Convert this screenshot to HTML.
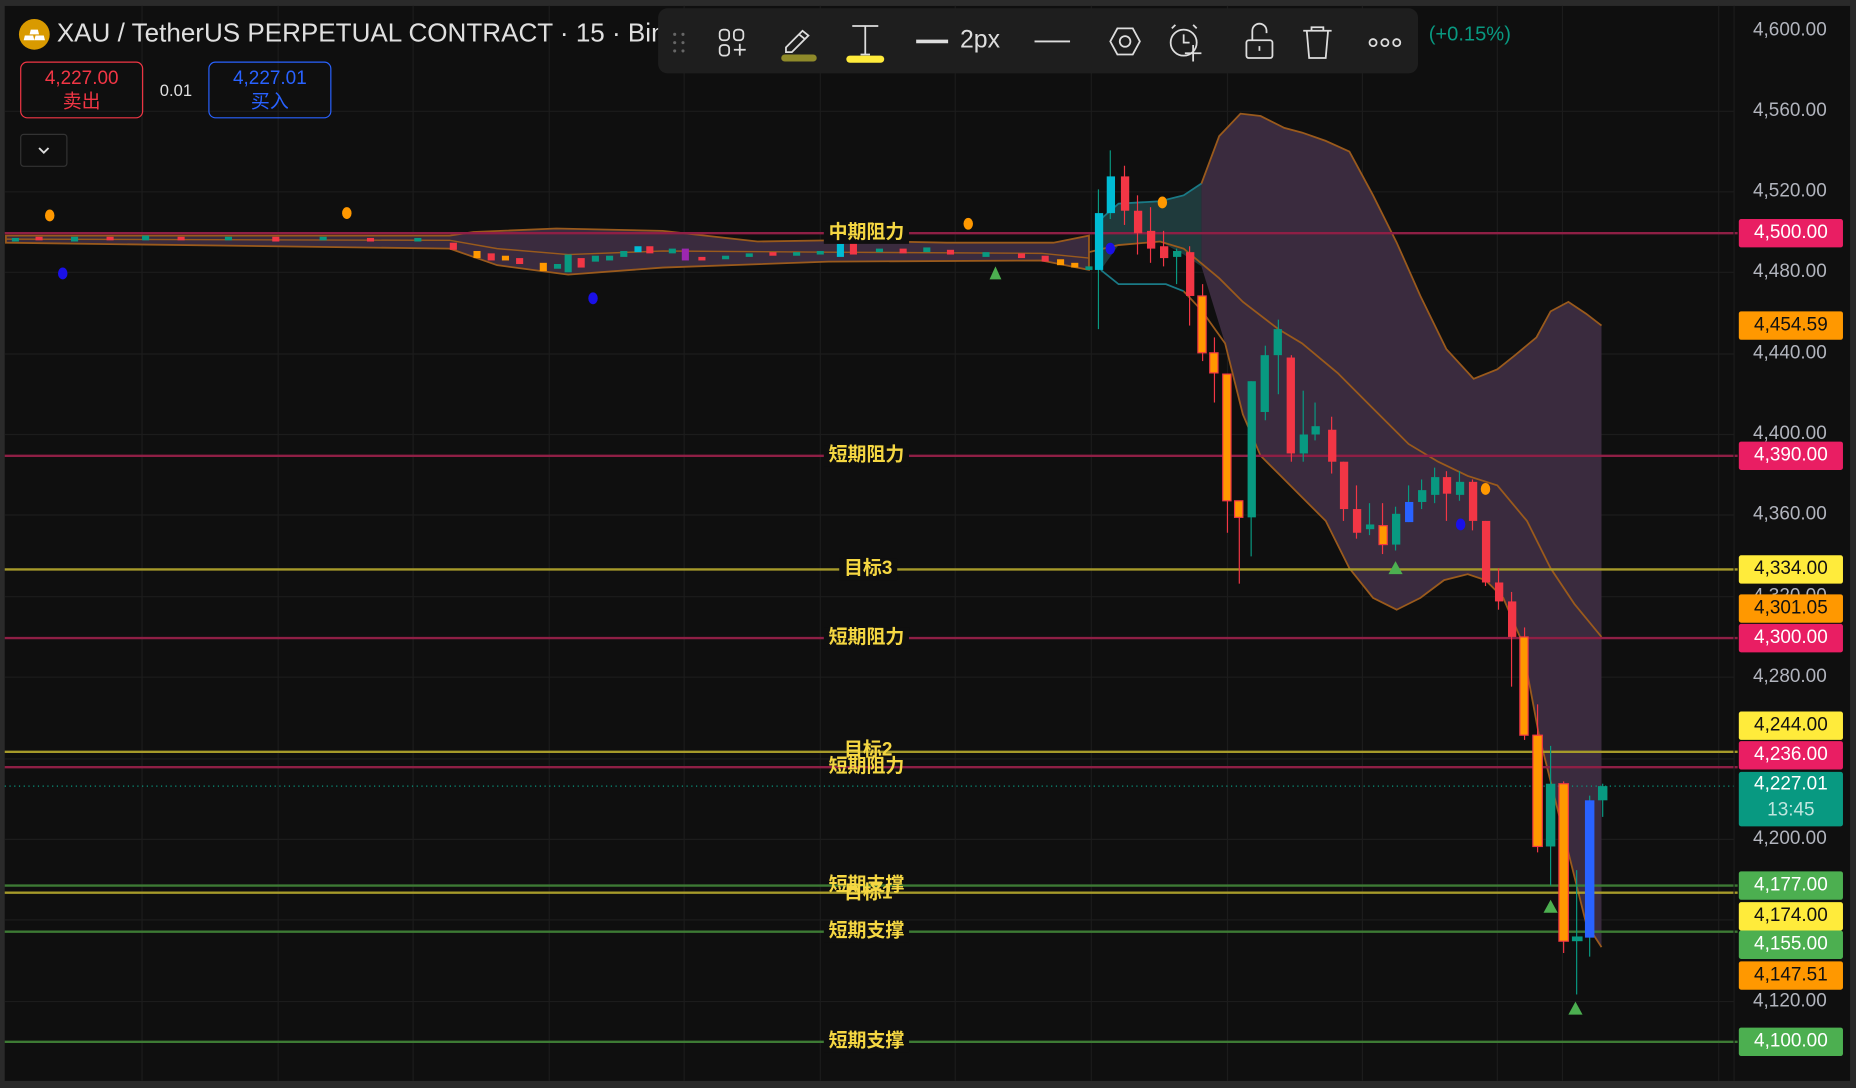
<!DOCTYPE html>
<html><head><meta charset="utf-8"><style>
html,body{margin:0;padding:0;background:#0f0f0f;overflow:hidden}
#w{width:1568px;height:919px;transform:scale(1.18367,1.18389);transform-origin:0 0;position:relative;background:#0f0f0f;font-family:"Liberation Sans","Noto Sans CJK SC",sans-serif}
.ax{position:absolute;left:1481px;color:#b2b5be;font-size:16px;line-height:20px}
.bd{position:absolute;left:1469px;width:88px;height:24px;border-radius:2px;font-size:16px;line-height:24px;text-align:center;color:#fff}
.lb{position:absolute;color:#f5d742;font-size:16px;font-weight:bold;background:#0f0f0f;padding:0 4px;line-height:18px;transform:translateY(-9px)}
</style></head><body><div id="w">
<svg width="1568" height="919" style="position:absolute;left:0;top:0">
<rect x="0" y="0" width="1568" height="5" fill="#2a2a2a"/>
<rect x="0" y="0" width="4" height="919" fill="#2a2a2a"/>
<rect x="1563" y="0" width="5" height="919" fill="#2a2a2a"/>
<rect x="0" y="913" width="1568" height="6" fill="#2a2a2a"/>
<g stroke="#1c1c1c" stroke-width="1">
<line x1="120" y1="5" x2="120" y2="913"/><line x1="235" y1="5" x2="235" y2="913"/><line x1="349" y1="5" x2="349" y2="913"/><line x1="464" y1="5" x2="464" y2="913"/><line x1="578" y1="5" x2="578" y2="913"/><line x1="693" y1="5" x2="693" y2="913"/><line x1="807" y1="5" x2="807" y2="913"/><line x1="922" y1="5" x2="922" y2="913"/><line x1="1037" y1="5" x2="1037" y2="913"/><line x1="1151" y1="5" x2="1151" y2="913"/><line x1="1265" y1="5" x2="1265" y2="913"/><line x1="1320" y1="5" x2="1320" y2="913"/><line x1="1452" y1="5" x2="1452" y2="913"/>
<line x1="4" y1="94" x2="1465" y2="94"/><line x1="4" y1="162" x2="1465" y2="162"/><line x1="4" y1="230" x2="1465" y2="230"/><line x1="4" y1="299" x2="1465" y2="299"/><line x1="4" y1="367" x2="1465" y2="367"/><line x1="4" y1="435" x2="1465" y2="435"/><line x1="4" y1="504" x2="1465" y2="504"/><line x1="4" y1="572" x2="1465" y2="572"/><line x1="4" y1="641" x2="1465" y2="641"/><line x1="4" y1="709" x2="1465" y2="709"/><line x1="4" y1="777" x2="1465" y2="777"/><line x1="4" y1="846" x2="1465" y2="846"/>
</g>
<!-- flat band -->
<path d="M5,199 L380,199 L400,196 L470,193 L560,195 L640,204 L700,203 L800,205 L890,205 L920,199 L920,228 L880,220 L700,221 L560,226 L480,232 L420,224 L380,210 L5,205 Z" fill="#3a2b3e" stroke="#9a5a1c" stroke-width="1.5"/>
<path d="M5,202 L380,203 L420,210 L480,215 L560,212 L700,213 L880,214 L920,218" fill="none" stroke="#9a5a1c" stroke-width="1.2"/>
<!-- big bands -->
<path d="M1015,155 L1030,115 L1048,96 L1065,98 L1085,108 L1100,112 L1120,119 L1140,128 L1160,165 L1180,205 L1200,250 L1222,295 L1245,320 L1265,312 L1280,300 L1298,285 L1310,263 L1325,255 L1340,265 L1353,275 L1353,800 L1340,780 L1320,700 L1300,620 L1285,540 L1270,505 L1255,490 L1240,485 L1220,490 L1200,505 L1180,515 L1160,505 L1140,480 L1120,440 L1100,420 L1080,400 L1065,385 L1050,350 L1035,290 L1015,225 Z" fill="#3a2b3e"/>
<path d="M930,228 L945,207 L980,204 L1000,215 L1015,225 L1015,155 L1000,165 L980,170 L945,172 L930,185 Z" fill="#1f3a3c"/>
<path d="M930,228 L945,240 L985,240 L1000,246" fill="none" stroke="#1a7a86" stroke-width="1.5"/>
<path d="M930,185 L945,172 L980,170 L1000,165 L1015,155" fill="none" stroke="#1a7a86" stroke-width="1.5"/>
<path d="M1015,155 L1030,115 L1048,96 L1065,98 L1085,108 L1100,112 L1120,119 L1140,128 L1160,165 L1180,205 L1200,250 L1222,295 L1245,320 L1265,312 L1280,300 L1298,285 L1310,263 L1325,255 L1340,265 L1353,275" fill="none" stroke="#9a5a1c" stroke-width="1.5"/>
<path d="M1000,246 L1015,262 L1035,290 L1050,350 L1065,385 L1080,400 L1100,420 L1120,440 L1140,480 L1160,505 L1180,515 L1200,505 L1220,490 L1240,485 L1255,490 L1270,505 L1285,540 L1300,620 L1320,700 L1340,780 L1353,800" fill="none" stroke="#9a5a1c" stroke-width="1.5"/>
<path d="M920,213 L945,207 L980,204 L1000,210 L1030,235 L1050,255 L1080,278 L1100,290 L1130,315 L1160,345 L1190,375 L1215,390 L1240,402 L1265,410 L1290,440 L1310,480 L1330,510 L1353,538" fill="none" stroke="#9a5a1c" stroke-width="1.5"/>
<!-- horizontal lines -->
<g stroke-width="2">
<line x1="4" y1="197" x2="1468" y2="197" stroke="#8e1f45"/>
<line x1="4" y1="385" x2="1468" y2="385" stroke="#8e1f45"/>
<line x1="4" y1="481" x2="1468" y2="481" stroke="#a69a2a"/>
<line x1="4" y1="539" x2="1468" y2="539" stroke="#8e1f45"/>
<line x1="4" y1="635" x2="1468" y2="635" stroke="#a69a2a"/>
<line x1="4" y1="648" x2="1468" y2="648" stroke="#8e1f45"/>
<line x1="4" y1="748" x2="1468" y2="748" stroke="#3d7a34"/>
<line x1="4" y1="754" x2="1468" y2="754" stroke="#a69a2a"/>
<line x1="4" y1="787" x2="1468" y2="787" stroke="#3d7a34"/>
<line x1="4" y1="880" x2="1468" y2="880" stroke="#3d7a34"/>
</g>
<line x1="4" y1="664" x2="1468" y2="664" stroke="#089981" stroke-width="1" stroke-dasharray="1,3"/>
<!-- flat candles -->
<g>
<rect x="10" y="201" width="6" height="3" fill="#089981"/><rect x="30" y="200" width="6" height="3" fill="#f23645"/><rect x="60" y="200" width="6" height="4" fill="#089981"/><rect x="90" y="200" width="6" height="3" fill="#f23645"/><rect x="120" y="199" width="6" height="4" fill="#089981"/><rect x="150" y="200" width="6" height="3" fill="#f23645"/><rect x="190" y="200" width="6" height="3" fill="#089981"/><rect x="230" y="200" width="6" height="4" fill="#f23645"/><rect x="270" y="200" width="6" height="3" fill="#089981"/><rect x="310" y="201" width="6" height="3" fill="#f23645"/><rect x="350" y="201" width="6" height="3" fill="#089981"/>
<rect x="380" y="205" width="6" height="6" fill="#f23645"/><rect x="400" y="212" width="6" height="6" fill="#ff9800"/><rect x="412" y="214" width="6" height="6" fill="#f23645"/><rect x="424" y="216" width="6" height="4" fill="#ff9800"/><rect x="436" y="218" width="6" height="5" fill="#f23645"/><rect x="456" y="222" width="6" height="7" fill="#ff9800"/><rect x="468" y="223" width="6" height="4" fill="#089981"/><rect x="477" y="215" width="6" height="15" fill="#089981"/><rect x="488" y="218" width="6" height="8" fill="#f23645"/><rect x="500" y="216" width="6" height="5" fill="#089981"/><rect x="512" y="216" width="6" height="4" fill="#089981"/><rect x="524" y="212" width="6" height="5" fill="#089981"/><rect x="536" y="208" width="6" height="5" fill="#00bcd4"/><rect x="546" y="208" width="6" height="6" fill="#f23645"/><rect x="565" y="210" width="6" height="4" fill="#089981"/><rect x="576" y="210" width="6" height="10" fill="#9c27b0"/><rect x="590" y="217" width="6" height="3" fill="#f23645"/><rect x="610" y="216" width="6" height="3" fill="#089981"/><rect x="630" y="214" width="6" height="3" fill="#089981"/><rect x="650" y="213" width="6" height="3" fill="#f23645"/><rect x="670" y="213" width="6" height="3" fill="#089981"/><rect x="690" y="212" width="6" height="3" fill="#089981"/><rect x="707" y="206" width="6" height="11" fill="#00bcd4"/><rect x="718" y="205" width="6" height="10" fill="#f23645"/><rect x="740" y="210" width="6" height="3" fill="#089981"/><rect x="760" y="210" width="6" height="4" fill="#f23645"/><rect x="780" y="209" width="6" height="4" fill="#089981"/><rect x="800" y="211" width="6" height="4" fill="#f23645"/><rect x="830" y="213" width="6" height="4" fill="#089981"/><rect x="860" y="214" width="6" height="4" fill="#f23645"/><rect x="880" y="216" width="6" height="5" fill="#f23645"/><rect x="893" y="219" width="6" height="5" fill="#ff9800"/><rect x="905" y="222" width="6" height="4" fill="#ff9800"/><rect x="917" y="225" width="6" height="3" fill="#089981"/>
</g>
<!-- main candles -->
<g stroke-width="1">
<line x1="928" y1="160" x2="928" y2="278" stroke="#089981"/><rect x="925" y="180" width="7" height="48" fill="#00bcd4"/>
<line x1="938" y1="127" x2="938" y2="185" stroke="#089981"/><rect x="935" y="149" width="7" height="31" fill="#00bcd4"/>
<line x1="950" y1="140" x2="950" y2="190" stroke="#f23645"/><rect x="947" y="149" width="7" height="29" fill="#f23645"/>
<line x1="961" y1="165" x2="961" y2="215" stroke="#f23645"/><rect x="958" y="178" width="7" height="19" fill="#f23645"/>
<line x1="972" y1="175" x2="972" y2="222" stroke="#f23645"/><rect x="969" y="195" width="7" height="15" fill="#f23645"/>
<line x1="983" y1="195" x2="983" y2="225" stroke="#f23645"/><rect x="980" y="208" width="7" height="10" fill="#f23645"/>
<line x1="994" y1="210" x2="994" y2="240" stroke="#089981"/><rect x="991" y="212" width="7" height="5" fill="#089981"/>
<line x1="1005" y1="208" x2="1005" y2="275" stroke="#f23645"/><rect x="1002" y="213" width="7" height="37" fill="#f23645"/>
<line x1="1016" y1="240" x2="1016" y2="305" stroke="#f23645"/><rect x="1012" y="250" width="7" height="48" fill="#ff9800" stroke="#f23645"/>
<line x1="1026" y1="285" x2="1026" y2="340" stroke="#f23645"/><rect x="1022" y="298" width="7" height="17" fill="#ff9800" stroke="#f23645"/>
<line x1="1037" y1="316" x2="1037" y2="450" stroke="#f23645"/><rect x="1033" y="316" width="7" height="107" fill="#ff9800" stroke="#f23645"/>
<line x1="1047" y1="423" x2="1047" y2="493" stroke="#f23645"/><rect x="1043" y="423" width="7" height="14" fill="#ff9800" stroke="#f23645"/>
<line x1="1057" y1="322" x2="1057" y2="470" stroke="#089981"/><rect x="1054" y="322" width="7" height="115" fill="#089981"/>
<line x1="1069" y1="292" x2="1069" y2="355" stroke="#089981"/><rect x="1065" y="300" width="7" height="48" fill="#089981"/>
<line x1="1080" y1="270" x2="1080" y2="333" stroke="#089981"/><rect x="1076" y="278" width="7" height="22" fill="#089981"/>
<line x1="1091" y1="300" x2="1091" y2="390" stroke="#f23645"/><rect x="1087" y="302" width="7" height="81" fill="#f23645"/>
<line x1="1101" y1="330" x2="1101" y2="390" stroke="#089981"/><rect x="1098" y="367" width="7" height="16" fill="#089981"/>
<line x1="1111" y1="340" x2="1111" y2="372" stroke="#089981"/><rect x="1108" y="360" width="7" height="7" fill="#089981"/>
<line x1="1125" y1="352" x2="1125" y2="400" stroke="#f23645"/><rect x="1122" y="363" width="7" height="27" fill="#f23645"/>
<line x1="1135" y1="390" x2="1135" y2="440" stroke="#f23645"/><rect x="1132" y="390" width="7" height="40" fill="#f23645"/>
<line x1="1146" y1="410" x2="1146" y2="455" stroke="#f23645"/><rect x="1143" y="430" width="7" height="20" fill="#f23645"/>
<line x1="1157" y1="425" x2="1157" y2="452" stroke="#089981"/><rect x="1154" y="443" width="7" height="4" fill="#089981"/>
<line x1="1168" y1="425" x2="1168" y2="468" stroke="#f23645"/><rect x="1165" y="444" width="7" height="16" fill="#ff9800" stroke="#f23645"/>
<line x1="1179" y1="428" x2="1179" y2="465" stroke="#089981"/><rect x="1176" y="434" width="7" height="26" fill="#089981"/>
<line x1="1190" y1="410" x2="1190" y2="441" stroke="#089981"/><rect x="1187" y="424" width="7" height="17" fill="#2962ff"/>
<line x1="1201" y1="405" x2="1201" y2="430" stroke="#089981"/><rect x="1198" y="414" width="7" height="10" fill="#089981"/>
<line x1="1212" y1="395" x2="1212" y2="425" stroke="#089981"/><rect x="1209" y="403" width="7" height="15" fill="#089981"/>
<line x1="1222" y1="398" x2="1222" y2="440" stroke="#f23645"/><rect x="1219" y="403" width="7" height="14" fill="#f23645"/>
<line x1="1233" y1="398" x2="1233" y2="423" stroke="#089981"/><rect x="1230" y="407" width="7" height="11" fill="#089981"/>
<line x1="1244" y1="405" x2="1244" y2="448" stroke="#f23645"/><rect x="1241" y="407" width="7" height="33" fill="#f23645"/>
<line x1="1255" y1="440" x2="1255" y2="495" stroke="#f23645"/><rect x="1252" y="440" width="7" height="52" fill="#f23645"/>
<line x1="1266" y1="480" x2="1266" y2="515" stroke="#f23645"/><rect x="1263" y="492" width="7" height="16" fill="#f23645"/>
<line x1="1277" y1="500" x2="1277" y2="580" stroke="#f23645"/><rect x="1274" y="508" width="7" height="30" fill="#f23645"/>
<line x1="1288" y1="530" x2="1288" y2="625" stroke="#f23645"/><rect x="1284" y="538" width="7" height="83" fill="#ff9800" stroke="#f23645"/>
<line x1="1299" y1="595" x2="1299" y2="720" stroke="#f23645"/><rect x="1295" y="621" width="8" height="94" fill="#ff9800" stroke="#f23645"/>
<line x1="1310" y1="630" x2="1310" y2="748" stroke="#089981"/><rect x="1306" y="662" width="8" height="53" fill="#089981"/>
<line x1="1321" y1="660" x2="1321" y2="805" stroke="#f23645"/><rect x="1317" y="662" width="8" height="133" fill="#ff9800" stroke="#f23645"/>
<line x1="1332" y1="735" x2="1332" y2="840" stroke="#089981"/><rect x="1328" y="791" width="9" height="4" fill="#089981"/>
<line x1="1343" y1="672" x2="1343" y2="808" stroke="#089981"/><rect x="1339" y="676" width="8" height="116" fill="#2962ff"/>
<line x1="1354" y1="662" x2="1354" y2="690" stroke="#089981"/><rect x="1350" y="664" width="8" height="12" fill="#089981"/>
</g>
<!-- markers -->
<g fill="#ff9800"><ellipse cx="42" cy="182" rx="4" ry="5"/><ellipse cx="293" cy="180" rx="4" ry="5"/><ellipse cx="818" cy="189" rx="4" ry="5"/><ellipse cx="982" cy="171" rx="4" ry="5"/><ellipse cx="1255" cy="413" rx="4" ry="5"/></g>
<g fill="#1a10e8"><ellipse cx="53" cy="231" rx="4" ry="5"/><ellipse cx="501" cy="252" rx="4" ry="5"/><ellipse cx="938" cy="210" rx="4" ry="5"/><ellipse cx="1234" cy="443" rx="4" ry="5"/></g>
<g fill="#4caf50"><path d="M841,225 L846,236 L836,236Z"/><path d="M1179,474 L1185,485 L1173,485Z"/><path d="M1310,760 L1316,771 L1304,771Z"/><path d="M1331,846 L1337,857 L1325,857Z"/></g>
<line x1="1465" y1="5" x2="1465" y2="913" stroke="#1c1c1c"/>
</svg>
<!-- line labels -->
<div class="lb" style="left:696px;top:197px">中期阻力</div>
<div class="lb" style="left:696px;top:385px">短期阻力</div>
<div class="lb" style="left:709px;top:481px">目标3</div>
<div class="lb" style="left:696px;top:539px">短期阻力</div>
<div class="lb" style="left:709px;top:634px;background:none">目标2</div>
<div class="lb" style="left:696px;top:648px;background:none">短期阻力</div>
<div class="lb" style="left:696px;top:748px;background:none">短期支撑</div>
<div class="lb" style="left:709px;top:755px;background:none">目标1</div>
<div class="lb" style="left:696px;top:787px">短期支撑</div>
<div class="lb" style="left:696px;top:880px">短期支撑</div>
<!-- axis -->
<div class="ax" style="top:16px">4,600.00</div>
<div class="ax" style="top:84px">4,560.00</div>
<div class="ax" style="top:152px">4,520.00</div>
<div class="ax" style="top:220px">4,480.00</div>
<div class="ax" style="top:289px">4,440.00</div>
<div class="ax" style="top:357px">4,400.00</div>
<div class="ax" style="top:425px">4,360.00</div>
<div class="ax" style="top:494px">4,320.00</div>
<div class="ax" style="top:562px">4,280.00</div>
<div class="ax" style="top:699px">4,200.00</div>
<div class="ax" style="top:836px">4,120.00</div>
<div class="bd" style="top:185px;background:#e91e63">4,500.00</div>
<div class="bd" style="top:263px;background:#ff9800;color:#111">4,454.59</div>
<div class="bd" style="top:373px;background:#e91e63">4,390.00</div>
<div class="bd" style="top:469px;background:#ffeb3b;color:#111">4,334.00</div>
<div class="bd" style="top:502px;background:#ff9800;color:#111">4,301.05</div>
<div class="bd" style="top:527px;background:#e91e63">4,300.00</div>
<div class="bd" style="top:601px;background:#ffeb3b;color:#111">4,244.00</div>
<div class="bd" style="top:626px;background:#e91e63">4,236.00</div>
<div class="bd" style="top:652px;height:46px;line-height:22px;background:#089981">4,227.01<br><span style="color:#bfe6df">13:45</span></div>
<div class="bd" style="top:736px;background:#4caf50">4,177.00</div>
<div class="bd" style="top:762px;background:#ffeb3b;color:#111">4,174.00</div>
<div class="bd" style="top:786px;background:#4caf50">4,155.00</div>
<div class="bd" style="top:812px;background:#ff9800;color:#111">4,147.51</div>
<div class="bd" style="top:868px;background:#4caf50">4,100.00</div>
<!-- header -->
<div style="position:absolute;left:16px;top:16px;width:26px;height:26px;border-radius:50%;background:#d99a00"></div>
<svg style="position:absolute;left:16px;top:16px" width="26" height="26"><path d="M10,9 h6 l1,4 h-8z M5,14 h7 l1,4 h-9z M14,14 h7 l1,4 h-9z" fill="#fff"/></svg>
<div style="position:absolute;left:48px;top:15px;color:#e0e0e0;font-size:22px;white-space:nowrap">XAU / TetherUS PERPETUAL CONTRACT · 15 · Bina</div>
<div style="position:absolute;left:1207px;top:19px;color:#089981;font-size:17px">(+0.15%)</div>
<div style="position:absolute;left:17px;top:52px;width:104px;height:48px;border:1px solid #f23645;border-radius:6px;color:#f23645;text-align:center;font-size:16px;line-height:20px;padding-top:4px;box-sizing:border-box">4,227.00<br>卖出</div>
<div style="position:absolute;left:135px;top:68px;color:#e0e0e0;font-size:14px">0.01</div>
<div style="position:absolute;left:176px;top:52px;width:104px;height:48px;border:1px solid #2962ff;border-radius:6px;color:#2962ff;text-align:center;font-size:16px;line-height:20px;padding-top:4px;box-sizing:border-box">4,227.01<br>买入</div>
<div style="position:absolute;left:17px;top:113px;width:40px;height:28px;border:1px solid #333;border-radius:3px;box-sizing:border-box"></div>
<svg style="position:absolute;left:17px;top:113px" width="40" height="28"><path d="M16,12 l4,4 l4,-4" fill="none" stroke="#ddd" stroke-width="1.6"/></svg>
<!-- toolbar -->
<div style="position:absolute;left:556px;top:7px;width:642px;height:55px;background:#1e1e1e;border-radius:8px"></div>
<svg style="position:absolute;left:556px;top:7px" width="642" height="55" fill="none" stroke="#ddd" stroke-width="1.5">
<g fill="#666" stroke="none"><circle cx="14" cy="22" r="1.3"/><circle cx="21" cy="22" r="1.3"/><circle cx="14" cy="29" r="1.3"/><circle cx="21" cy="29" r="1.3"/><circle cx="14" cy="36" r="1.3"/><circle cx="21" cy="36" r="1.3"/></g>
<rect x="52" y="18" width="8" height="9" rx="3"/><rect x="64" y="18" width="8" height="9" rx="3"/><rect x="52" y="31" width="8" height="9" rx="3"/><path d="M64,35 h10 M69,30 v10"/>
<path d="M108,33 l14,-14 l5,4 l-14,14 h-5z M119,22 l5,4"/><rect x="104" y="39" width="30" height="6" rx="3" fill="#8f8a2a" stroke="none"/>
<path d="M164,15 h22 M175,15 v24 M171,39 h8"/><rect x="159" y="40" width="32" height="6" rx="3" fill="#ffeb3b" stroke="none"/>
<path d="M218,28 h27" stroke-width="3"/>
<path d="M318,28 h30"/>
<path d="M382,28 l6,-11 h13 l6,11 l-6,11 h-13z"/><circle cx="394.5" cy="28" r="4.5"/>
<circle cx="444" cy="29" r="11"/><path d="M444,22 v7 h5 M434,17 l3,-3 M455,17 l-3,-3 M452,31 v14 M445,38 h14"/>
<path d="M502,27 v-8 a6,6 0 0 1 12,0 v2"/><rect x="497" y="27" width="22" height="15" rx="2"/><path d="M508,32 v4"/>
<path d="M545,19 h24 M552,19 v-3 h10 v3 M548,19 l2,23 h14 l2,-23"/>
<circle cx="604" cy="29" r="3"/><circle cx="614" cy="29" r="3"/><circle cx="624" cy="29" r="3"/>
</svg>
<div style="position:absolute;left:811px;top:22px;color:#ddd;font-size:21px">2px</div>
</div></body></html>
